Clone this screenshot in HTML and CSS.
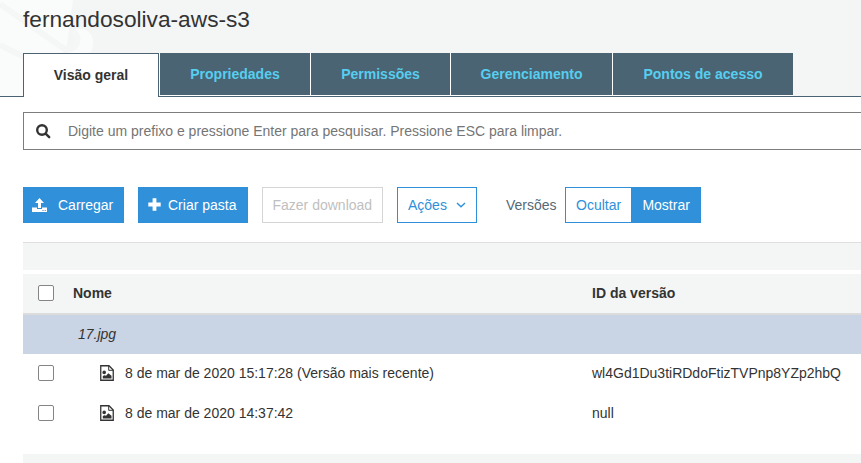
FILE: index.html
```html
<!DOCTYPE html>
<html lang="pt-BR">
<head>
<meta charset="utf-8">
<title>fernandosoliva-aws-s3</title>
<link rel="stylesheet" href="styles.css">
</head>
<body>
<header class="header">
  <svg class="watermark" viewBox="0 0 100 96" aria-hidden="true">
    <path class="wm-shape" d="M0 0H73L67 45L62 54H23V96H0Z"/>
    <path class="wm-shape" d="M75 29Q90 27 93 40Q94 49 89 54H62Q76 52 79 43Q80 36 75 29Z"/>
    <path class="wm-line" d="M0 4L60 46Q72 54 77 43Q79 36 73 31"/>
    <path class="wm-line" d="M0 45L24 57"/>
  </svg>
  <h1 class="title">fernandosoliva-aws-s3</h1>
  <nav class="tabs">
    <a class="tab tab-active">Visão geral</a>
    <a class="tab tab-props">Propriedades</a>
    <a class="tab tab-perms">Permissões</a>
    <a class="tab tab-manage">Gerenciamento</a>
    <a class="tab tab-points">Pontos de acesso</a>
  </nav>
</header>
<main class="content">
  <div class="search">
    <svg class="search-icon" viewBox="0 0 15 15"><circle cx="6" cy="6" r="4.8"/><path d="M9.6 9.6L13.2 13.2"/></svg>
    <span>Digite um prefixo e pressione Enter para pesquisar. Pressione ESC para limpar.</span>
  </div>
  <div class="toolbar">
    <button class="btn primary upload">
      <svg class="upload-icon" viewBox="0 0 15 14"><path d="M7.5 0L12 5H9V10H6V5H3Z"/><path fill-rule="evenodd" d="M0 9.5H5V11H10V9.5H15V14H0ZM10.5 12V13H11.5V12ZM12.7 12V13H13.7V12Z"/></svg>
      <span>Carregar</span>
    </button>
    <button class="btn primary create">
      <svg class="plus-icon" viewBox="0 0 13 13"><path d="M6.5 .3V12.7M.3 6.5H12.7"/></svg>
      <span>Criar pasta</span>
    </button>
    <button class="btn disabled download">Fazer download</button>
    <button class="btn outline actions"><span>Ações</span>
      <svg class="chevron" viewBox="0 0 10 6"><path d="M1 1L5 4.7L9 1"/></svg>
    </button>
    <span class="versions-label">Versões</span>
    <div class="toggle">
      <button class="btn outline hide">Ocultar</button>
      <button class="btn primary show">Mostrar</button>
    </div>
  </div>
  <div class="strip"></div>
  <div class="table">
    <div class="row head">
      <span class="check"></span><span class="name">Nome</span><span class="version">ID da versão</span>
    </div>
    <div class="row group"><em class="group-name">17.jpg</em></div>
    <div class="row">
      <span class="check"></span>
      <span class="name entry">
        <svg class="file-icon" viewBox="0 0 14 16"><path class="page" d="M.75.75H9L13.25 5V15.25H.75Z"/><path class="fold" d="M8.7 1V5.3H13"/><circle cx="4.2" cy="7.4" r="1.8"/><path d="M2.8 13.6V11L4.5 10.2L6 10.8L8.3 8.3L11.5 10.8V13.6Z"/></svg>
        <span>8 de mar de 2020 15:17:28 (Versão mais recente)</span>
      </span>
      <span class="version">wl4Gd1Du3tiRDdoFtizTVPnp8YZp2hbQ</span>
    </div>
    <div class="row">
      <span class="check"></span>
      <span class="name entry">
        <svg class="file-icon" viewBox="0 0 14 16"><path class="page" d="M.75.75H9L13.25 5V15.25H.75Z"/><path class="fold" d="M8.7 1V5.3H13"/><circle cx="4.2" cy="7.4" r="1.8"/><path d="M2.8 13.6V11L4.5 10.2L6 10.8L8.3 8.3L11.5 10.8V13.6Z"/></svg>
        <span>8 de mar de 2020 14:37:42</span>
      </span>
      <span class="version">null</span>
    </div>
  </div>
  <div class="footer-strip"></div>
</main>
</body>
</html>
```
FILE: styles.css
```css
* { box-sizing: border-box; }
body {
  margin: 0;
  height: 463px;
  overflow: hidden;
  background: #fff;
  color: #333;
  font: 14px/20px "Liberation Sans", Arial, sans-serif;
}
svg { display: block; flex: none; }
.header {
  position: relative;
  height: 97px;
  background: #f4f6f6;
  border-bottom: 1px solid #4b6473;
}
.watermark { position: absolute; left: 0; top: 0; width: 100px; height: 96px; }
.wm-shape { fill: #fafcfb; }
.wm-line { fill: none; stroke: #f5f7f7; stroke-width: 6; }
.title {
  position: relative;
  margin: 0;
  height: 53px;
  padding: 5px 0 0 23px;
  font-size: 22.7px;
  line-height: 28px;
  font-weight: 400;
}
.tabs { position: relative; display: flex; margin-left: 23px; height: 44px; width: 770px; }
.tab {
  height: 43px;
  background: #4b6473;
  color: #56cef0;
  font-weight: 700;
  line-height: 42px;
  text-align: center;
  border-bottom: 1px solid #fff;
  border-left: 1px solid #fff;
}
.tab-active {
  width: 136px;
  height: 44px;
  background: #fff;
  color: #333;
  line-height: 43px;
  border: 1px solid #4b6473;
  border-bottom: 0;
}
.tab-props { width: 151px; }
.tab-perms { width: 140px; }
.tab-manage { width: 162px; }
.tab-points { width: 181px; }
.content { padding-left: 23px; }
.search {
  display: flex;
  align-items: center;
  height: 38px;
  margin-top: 15px;
  padding-left: 12px;
  border: 1px solid #7d7d7d;
  border-right: 0;
  color: #757575;
}
.search-icon { width: 15px; height: 15px; margin-right: 17px; fill: none; stroke: #333; stroke-width: 2.4; stroke-linecap: round; }
.toolbar { display: flex; align-items: center; height: 36px; margin: 37px 0 19px; }
.btn {
  display: flex;
  align-items: center;
  height: 36px;
  padding: 0 10px;
  border: 1px solid #2f90d9;
  font: inherit;
  white-space: nowrap;
}
.primary { background: #3090d9; color: #fff; }
.outline { background: #fff; color: #2f90d9; }
.disabled { background: #fff; color: #bfbfbf; border-color: #d5d5d5; }
.upload { width: 101px; padding-left: 8px; }
.upload-icon { width: 15px; height: 14px; margin-right: 11px; fill: #fff; }
.create { width: 110px; margin-left: 14px; padding-left: 9px; }
.plus-icon { width: 13px; height: 13px; margin: 0 7px 1px 0; stroke: #fff; stroke-width: 3.8; }
.download { width: 121px; margin-left: 14px; padding-left: 9.5px; }
.actions { width: 80px; margin-left: 14px; }
.chevron { width: 10px; height: 6px; margin-left: 9px; fill: none; stroke: #2f90d9; stroke-width: 1.4; }
.versions-label { width: 59px; margin-left: 29px; color: #566a76; }
.toggle { display: flex; }
.hide { width: 66px; border-right: 0; }
.show { width: 70px; padding-left: 10.4px; }
.strip { height: 28px; margin-bottom: 4px; background: #f4f6f6; border-top: 1px solid #dfdfdf; }
.row { display: flex; align-items: center; height: 40px; padding: 0 0 2px 15px; }
.head { height: 41px; padding-bottom: 1px; background: #f4f6f6; border-bottom: 2px solid #dcdcdc; font-weight: 700; }
.group { height: 39px; background: #c9d4e5; padding-left: 55px; }
.check { width: 16px; height: 16px; flex: none; border: 1px solid #858585; border-radius: 2px; background: #fff; }
.name { width: 519px; margin-left: 19px; }
.entry { display: flex; align-items: center; padding-left: 27px; }
.file-icon { width: 14px; height: 16px; margin-right: 11px; fill: #333; }
.page, .fold { fill: none; stroke: #333; stroke-width: 1.3; }
.fold { stroke-width: 1; }
.footer-strip { height: 9px; margin-top: 20px; background: #f4f6f6; }
```
